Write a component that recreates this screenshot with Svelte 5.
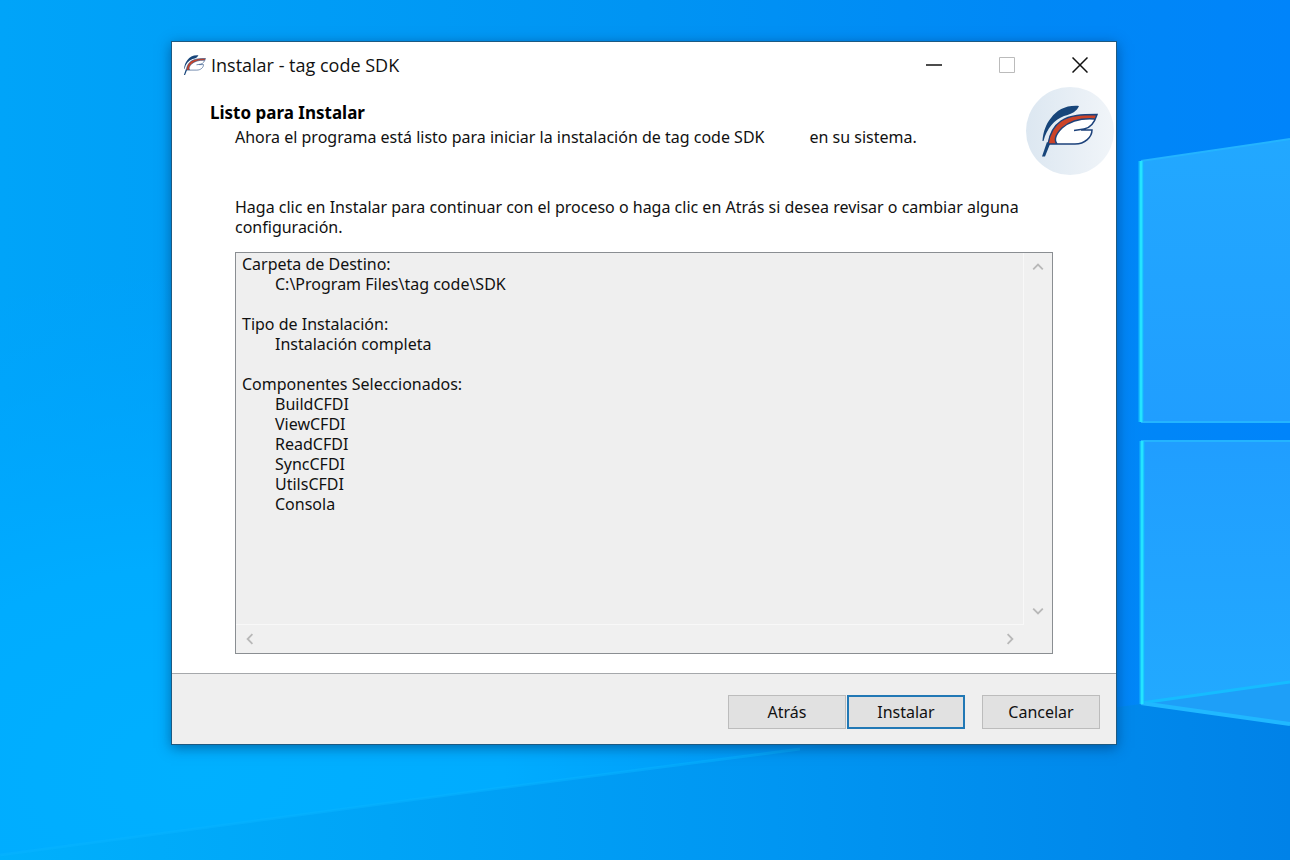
<script lang="ts">
	interface Section {
		title: string;
		items: string[];
	}

	const product = 'tag code SDK';

	const sections: Section[] = [
		{ title: 'Carpeta de Destino:', items: ['C:\\Program Files\\tag code\\SDK'] },
		{ title: 'Tipo de Instalación:', items: ['Instalación completa'] },
		{
			title: 'Componentes Seleccionados:',
			items: ['BuildCFDI', 'ViewCFDI', 'ReadCFDI', 'SyncCFDI', 'UtilsCFDI', 'Consola']
		}
	];

	let summary = $derived(
		sections.map((s) => [s.title, ...s.items.map((item) => `\t${item}`)].join('\n')).join('\n\n')
	);
</script>

{#snippet feather()}
	<path
		d="M16.500 54C17 45 20 37 25 31C31 23 40 18 53 19C51 24 46 27 38 29C28 33 21 41 17.500 54Z"
		fill="#17457a"
	/>
	<path
		d="M22 57C24 45 29 38 35 34C44 28 56 27.500 71 27.500C69 34 65 41 58 42L49 43H66C66 50 59 57 49 57Z"
		fill="#fff"
	/>
	<path
		d="M22 57C24 45 29 38 35 34C44 28 56 27.500 71 27.500L68.500 32C54 31 43 35 36 41C31 46 27 52 31 57Z"
		fill="#cc4328"
	/>
	<path
		d="M22 57C24 45 29 38 35 34C44 28 56 27.500 71 27.500C69 34 65 41 58 42L48 43.500M55 43H66C66 50 59 57 49 57H22M68.500 32C54 31 43 35 36 41C31 46 27 52 31 57"
		fill="none"
		stroke="#1c427b"
		stroke-width="1.500"
	/>
	<path d="M16 69.500L21 55L24 57L19 69.500Z" fill="#17457a" />
{/snippet}

<div class="desktop">
	<svg class="wallpaper" viewBox="0 0 1290 860" preserveAspectRatio="none" aria-hidden="true">
		<defs>
			<linearGradient id="sky" x1="0" y1="0" x2="1" y2="0">
				<stop offset="0" stop-color="#00a4f9" />
				<stop offset="0.5" stop-color="#0094f3" />
				<stop offset="0.8" stop-color="#0088f6" />
				<stop offset="1" stop-color="#0084fa" />
			</linearGradient>
			<radialGradient id="glow" cx="0.15" cy="0.9" r="0.6">
				<stop offset="0" stop-color="#00b0ff" />
				<stop offset="0.4" stop-color="#00acff" />
				<stop offset="1" stop-color="#00a4ff" stop-opacity="0" />
			</radialGradient>
			<linearGradient id="floor" x1="0" y1="0" x2="1" y2="0">
				<stop offset="0" stop-color="#00b0fc" />
				<stop offset="0.3" stop-color="#00a4f7" />
				<stop offset="0.6" stop-color="#0096f2" />
				<stop offset="1" stop-color="#0082e8" />
			</linearGradient>
			<linearGradient id="pane" x1="0" y1="0" x2="0" y2="1">
				<stop offset="0" stop-color="#22a8ff" />
				<stop offset="1" stop-color="#209eff" />
			</linearGradient>
			<linearGradient id="pane-low" x1="0" y1="0" x2="0" y2="1">
				<stop offset="0" stop-color="#209eff" />
				<stop offset="1" stop-color="#22aaff" />
			</linearGradient>
		</defs>
		<rect width="1290" height="860" fill="url(#sky)" />
		<rect width="1290" height="860" fill="url(#glow)" />
		<path d="M0 855L500 788L1141 704L1290 724V860H0Z" fill="url(#floor)" />
		<path d="M0 855L500 788L800 749" fill="none" stroke="#08b4ff" stroke-width="3" opacity="0.500" />
		<path d="M1141 161L1290 139V422H1141Z" fill="url(#pane)" />
		<path d="M1141 441H1290V724L1141 703Z" fill="url(#pane-low)" />
		<path d="M1141 703L1290 682V724Z" fill="#1e9ff8" />
		<path d="M1141 161L1290 139M1141 422H1290M1141 441H1290" stroke="#24b4ff" stroke-width="2" />
		<path d="M1141 703L1290 682" stroke="#16bcff" stroke-width="3" />
		<path d="M1141 703L1290 724" stroke="#20b8ff" stroke-width="4" />
		<path d="M1141 161V422M1142 441V704" stroke="#10bcff" stroke-width="6" opacity="0.500" />
		<path d="M1141 161V422M1142 441V704" stroke="#24e4ff" stroke-width="3" />
	</svg>

	<main class="window">
		<div class="titlebar">
			<svg class="app-icon" viewBox="12 16 62 56" aria-hidden="true">{@render feather()}</svg>
			<span class="caption">Instalar - {product}</span>
			<button class="control" aria-label="Minimizar">
				<svg viewBox="0 0 16 16"><path d="M0 8H16" stroke="#111" stroke-width="1.500" /></svg>
			</button>
			<button class="control" aria-label="Maximizar" disabled>
				<svg viewBox="0 0 16 16"><path d="M0.500 0.500H15.500V15.500H0.500Z" stroke="#bbb" /></svg>
			</button>
			<button class="control" aria-label="Cerrar">
				<svg viewBox="0 0 16 16"><path d="M0.500 0.500L15.500 15.500M15.500 0.500L0.500 15.500" stroke="#111" stroke-width="1.500" /></svg>
			</button>
		</div>

		<header>
			<div class="heading">
				<h1>Listo para Instalar</h1>
				<p><span class="product">Ahora el programa está listo para iniciar la instalación de {product}</span>en su sistema.</p>
			</div>
			<svg class="logo" viewBox="0 0 88 88" role="img" aria-label={product}>
				<defs>
					<linearGradient id="disc" x1="0" y1="0" x2="1" y2="0">
						<stop offset="0" stop-color="#dce7f1" />
						<stop offset="1" stop-color="#f1f5f9" />
					</linearGradient>
				</defs>
				<circle cx="44" cy="44" r="44" fill="url(#disc)" />
				{@render feather()}
			</svg>
		</header>

		<section class="content">
			<label for="summary">
				Haga clic en Instalar para continuar con el proceso o haga clic en Atrás si desea revisar o
				cambiar alguna configuración.
			</label>
			<div class="memo">
				<textarea id="summary" readonly wrap="off" value={summary}></textarea>
				<div class="scroll vertical">
					<button aria-label="Subir" disabled>
						<svg viewBox="0 0 10 10"><path d="M1 7L5 3L9 7" /></svg>
					</button>
					<button aria-label="Bajar" disabled>
						<svg viewBox="0 0 10 10"><path d="M1 3L5 7L9 3" /></svg>
					</button>
				</div>
				<div class="scroll horizontal">
					<button aria-label="Izquierda" disabled>
						<svg viewBox="0 0 10 10"><path d="M7 1L3 5L7 9" /></svg>
					</button>
					<button aria-label="Derecha" disabled>
						<svg viewBox="0 0 10 10"><path d="M3 1L7 5L3 9" /></svg>
					</button>
				</div>
			</div>
		</section>

		<footer>
			<div class="pair">
				<button class="action">Atrás</button>
				<button class="action primary">Instalar</button>
			</div>
			<button class="action">Cancelar</button>
		</footer>
	</main>
</div>

<style>
	:global(body) {
		margin: 0;
	}

	.desktop {
		display: grid;
		min-height: 100vh;
		font-family: 'Noto Sans', Tahoma, sans-serif;
		font-size: 16px;
		line-height: 20px;
		color: #111;
		background: #0094f3;
	}

	.wallpaper {
		grid-area: 1 / 1;
		width: 100%;
		height: 100%;
		min-height: 0;
		contain: size;
	}

	.window {
		grid-area: 1 / 1;
		z-index: 1;
		display: flex;
		flex-direction: column;
		margin: 41px 173px 115px 171px;
		background: #fff;
		border: 1px solid #1d5a82;
		box-shadow: 0 3px 12px rgb(0 40 90 / 0.5);
	}

	button {
		padding: 0;
		font: inherit;
		color: inherit;
		background: none;
		border: none;
	}

	.titlebar {
		display: flex;
		align-items: center;
		height: 45px;
		padding-left: 10px;
	}

	.app-icon {
		width: 25px;
		height: 22px;
	}

	.caption {
		flex: 1;
		padding-left: 4px;
		font-family: 'Open Sans', 'Segoe UI', sans-serif;
		font-size: 18px;
		line-height: 24px;
	}

	.control {
		display: grid;
		place-items: center;
		width: 73px;
		height: 44px;

		& svg {
			width: 16px;
			height: 16px;
			fill: none;
		}
	}

	header {
		display: flex;
		justify-content: space-between;
		align-items: flex-start;
		padding: 0 2px 0 38px;
	}

	.heading {
		padding-top: 14px;
	}

	h1 {
		margin: 0;
		font-size: 17px;
		line-height: 24px;
		color: #000;
	}

	p {
		margin: 0;
		padding-left: 25px;
		line-height: 24px;
	}

	.product {
		margin-right: 45px;
	}

	.logo {
		flex-shrink: 0;
		width: 88px;
		height: 88px;
	}

	.content {
		display: flex;
		flex: 1;
		flex-direction: column;
		gap: 15px;
		padding: 22px 63px 19px;
	}

	.memo {
		display: grid;
		flex: 1;
		grid-template: 1fr 28px / 1fr 28px;
		background: #f0f0f0;
		border: 1px solid #8a8e92;
	}

	textarea {
		box-sizing: border-box;
		width: 100%;
		height: 100%;
		min-height: 280px;
		padding: 1px 6px;
		overflow: hidden;
		font: inherit;
		color: inherit;
		white-space: pre;
		tab-size: 33px;
		resize: none;
		outline: none;
		background: #efefef;
		border: solid #f8f8f8;
		border-width: 0 1px 1px 0;
	}

	.scroll {
		display: flex;
		justify-content: space-between;

		& button {
			display: grid;
			place-items: center;
			width: 28px;
			height: 28px;
		}

		& svg {
			width: 12px;
			height: 12px;
			fill: none;
			stroke: #b8b8b8;
			stroke-width: 1.5;
		}
	}

	.vertical {
		flex-direction: column;
	}

	footer {
		display: flex;
		justify-content: flex-end;
		gap: 17px;
		padding: 21px 16px 15px;
		background: #efefef;
		border-top: 1px solid #a5a8ab;
	}

	.pair {
		display: flex;
		gap: 1px;
	}

	.action {
		width: 118px;
		height: 34px;
		background: #e1e1e1;
		border: 1px solid #bcbcbc;
	}

	.primary {
		border: 2px solid #2178b5;
	}
</style>
